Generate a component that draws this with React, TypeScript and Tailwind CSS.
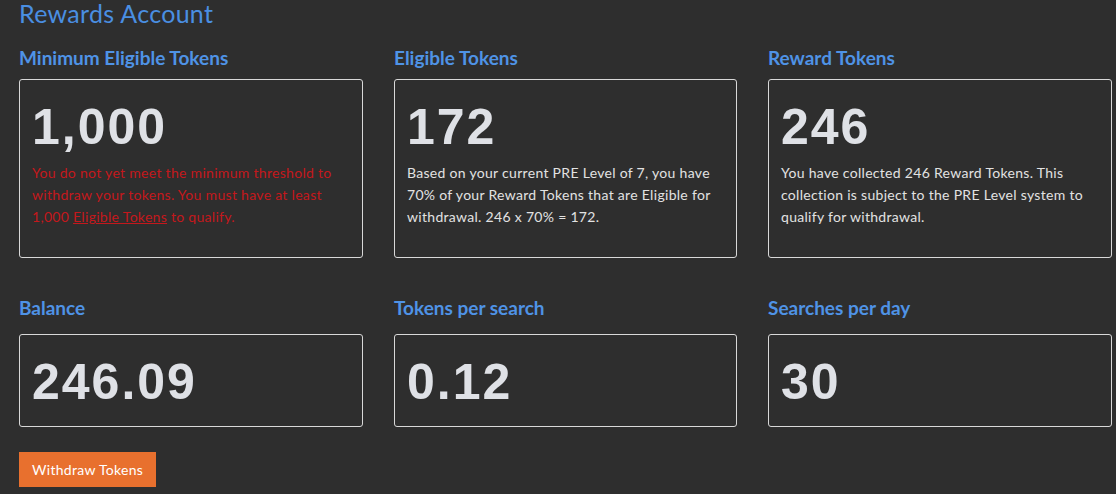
export default function App() {
  const font = { fontFamily: "Lato, 'Open Sans', sans-serif" };
  return (
    <div className="w-[1116px] h-[494px] overflow-hidden bg-[#2e2e2e] pl-[19px]" style={font}>
      <h1 className="text-[25px] leading-[26px] tracking-[0.3px] text-[#4a8fe2]">Rewards Account</h1>

      <div className="grid grid-cols-[344px_343px_344px] gap-x-[31px] mt-[21px]">
        <Card label="Minimum Eligible Tokens" value="1,000" gap="mt-[10px]">
          <p className="text-[14px] leading-[22px] tracking-[0.3px] text-[#c4181c]">
            You do not yet meet the minimum threshold to<br />
            withdraw your tokens. You must have at least<br />
            1,000 <a className="underline">Eligible Tokens</a> to qualify.
          </p>
        </Card>
        <Card label="Eligible Tokens" value="172" gap="mt-[10px]">
          <p className="text-[14px] leading-[22px] tracking-[0.3px] text-[#e2e2e2]">
            Based on your current PRE Level of 7, you have<br />
            70% of your Reward Tokens that are Eligible for<br />
            withdrawal. 246 x 70% = 172.
          </p>
        </Card>
        <Card label="Reward Tokens" value="246" gap="mt-[10px]">
          <p className="text-[14px] leading-[22px] tracking-[0.3px] text-[#e2e2e2]">
            You have collected 246 Reward Tokens. This<br />
            collection is subject to the PRE Level system to<br />
            qualify for withdrawal.
          </p>
        </Card>
      </div>

      <div className="grid grid-cols-[344px_343px_344px] gap-x-[31px] mt-[39px]">
        <Card label="Balance" value="246.09" gap="mt-[15px]" />
        <Card label="Tokens per search" value="0.12" gap="mt-[15px]" />
        <Card label="Searches per day" value="30" gap="mt-[15px]" />
      </div>

      <button className="mt-[25px] h-[35px] px-[13px] bg-[#e8702e] text-white text-[14px] tracking-[0.3px]">
        Withdraw Tokens
      </button>
    </div>
  );
}

function Card({
  label,
  value,
  gap,
  children,
}: {
  label: string;
  value: string;
  gap: string;
  children?: React.ReactNode;
}) {
  return (
    <div>
      <h3 className="text-[19px] leading-[22px] font-bold text-[#4f93e6]">{label}</h3>
      <div className={`${gap} border border-[#d8d8d8] rounded-[3px] pt-[21px] pb-[17px] px-[12px]`}>
        <div
          className="text-[50px] leading-[53px] font-bold tracking-[2px] text-[#dfe1e6]"
          style={{ fontFamily: "'Liberation Sans', Arial, sans-serif" }}
        >
          {value}
        </div>
        {children && <div className="mt-[8px] mb-[12px]">{children}</div>}
      </div>
    </div>
  );
}
